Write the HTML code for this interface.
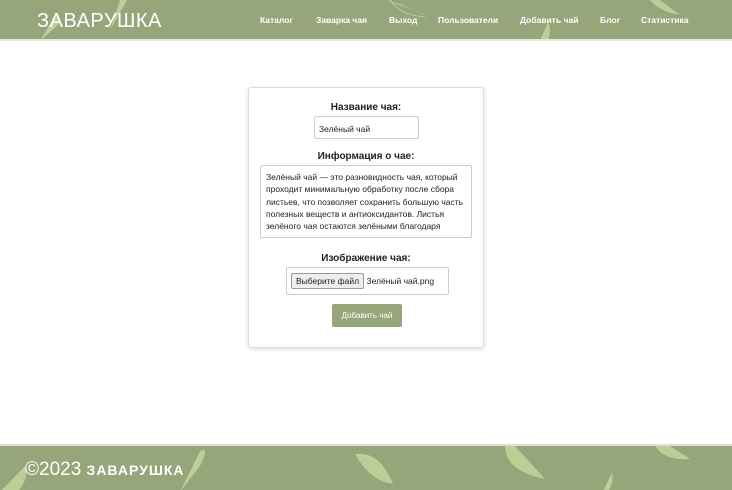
<!DOCTYPE html>
<html><head><meta charset="utf-8"><style>
*{box-sizing:border-box;margin:0;padding:0}
body{width:732px;height:490px;background:#fff;font-family:"Liberation Sans","DejaVu Sans",sans-serif;position:relative;overflow:hidden;color:#222}
.hdr{position:absolute;left:0;top:0;width:732px;height:41px;background:#96a57a;overflow:hidden;border-bottom:2px solid #e5e9dd}
.ftr{position:absolute;left:0;top:444px;width:732px;height:46px;background:#96a57a;overflow:hidden;border-top:2px solid #dcdfd6}
svg.bg{position:absolute;left:0;top:0}
.logo{position:absolute;left:37px;top:10px;color:#fff;font-size:20px;letter-spacing:.5px}
.nav{position:absolute;top:15px;font-size:8.5px;font-weight:bold;color:#fff}
.card{position:absolute;left:248px;top:87px;width:236px;height:261px;border:1px solid #ddd;border-radius:3px;box-shadow:0 1px 4px rgba(0,0,0,.15);background:#fff}
.lbl{position:absolute;width:100%;text-align:center;font-size:10px;font-weight:bold;color:#222}
.box{position:absolute;border:1px solid #ccc;border-radius:2px;font-size:8.5px;color:#222}
.btn{position:absolute;left:83px;top:216px;width:70px;height:23px;background:#96a57a;color:#fff;font-size:8px;text-align:center;line-height:23px;border-radius:2px}
</style></head><body>
<div class="hdr">
<svg class="bg" width="732" height="41">
<path d="M40 41 L55 15 Q60 8 58 25 Z" fill="#bccd96"/>
<path d="M120 0 L130 -5 L110 30 Z" fill="#bccd96"/>
<path d="M385 0 Q420 12 428 17 L400 4 Z" fill="#bccd96"/>
<path d="M390 0 Q400 15 425 17" stroke="#c8d4ad" fill="none" stroke-width=".7"/>
<path d="M540 41 L548 22 Q552 30 548 41 Z" fill="#bccd96"/>
<path d="M650 0 Q660 12 680 15 L660 0 Z" fill="#bccd96"/>
</svg>
<div class="logo">ЗАВАРУШКА</div>
<div class="nav" style="left:260px">Каталог</div>
<div class="nav" style="left:316px">Заварка чая</div>
<div class="nav" style="left:389px">Выход</div>
<div class="nav" style="left:438px">Пользователи</div>
<div class="nav" style="left:520px">Добавить чай</div>
<div class="nav" style="left:600px">Блог</div>
<div class="nav" style="left:641px">Статистика</div>
</div>
<div class="card">
<div class="lbl" style="top:14px">Название чая:</div>
<div class="box" style="left:65px;top:28px;width:105px;height:23px;padding:7px 4px">Зелёный чай</div>
<div class="lbl" style="top:63px">Информация о чае:</div>
<div class="box" style="left:11px;top:77px;width:212px;height:73px;padding:5px 5px;line-height:12.3px;overflow:hidden">Зелёный чай — это разновидность чая, который проходит минимальную обработку после сбора листьев, что позволяет сохранить большую часть полезных веществ и антиоксидантов. Листья зелёного чая остаются зелёными благодаря</div>
<div class="lbl" style="top:165px">Изображение чая:</div>
<div class="box" style="left:37px;top:179px;width:163px;height:28px;padding:5px 4px"><span style="display:inline-block;border:1px solid #999;background:#eee;border-radius:2px;padding:2px 4px">Выберите файл</span> Зелёный чай.png</div>
<div class="btn">Добавить чай</div>
</div>
<div class="ftr">
<svg class="bg" width="732" height="46">
<path d="M0 46 L25 20 Q30 30 18 46 Z" fill="#bccd96"/>
<path d="M180 46 L200 5 Q210 0 200 20 Z" fill="#bccd96"/>
<path d="M355 8 Q380 5 393 38 Q370 35 355 8 Z" fill="#bccd96"/>
<path d="M505 0 Q505 25 545 33 L515 0 Z" fill="#bccd96"/>
<path d="M603 46 L612 26 Q614 36 608 46 Z" fill="#bccd96"/>
<path d="M655 0 Q665 15 690 13 L670 0 Z" fill="#bccd96"/>
</svg>
<div style="position:absolute;left:25px;top:13px;color:#fff;font-size:19px">©2023 <span style="font-size:14px;font-weight:bold;letter-spacing:1px">ЗАВАРУШКА</span></div>
</div>
</body></html>
